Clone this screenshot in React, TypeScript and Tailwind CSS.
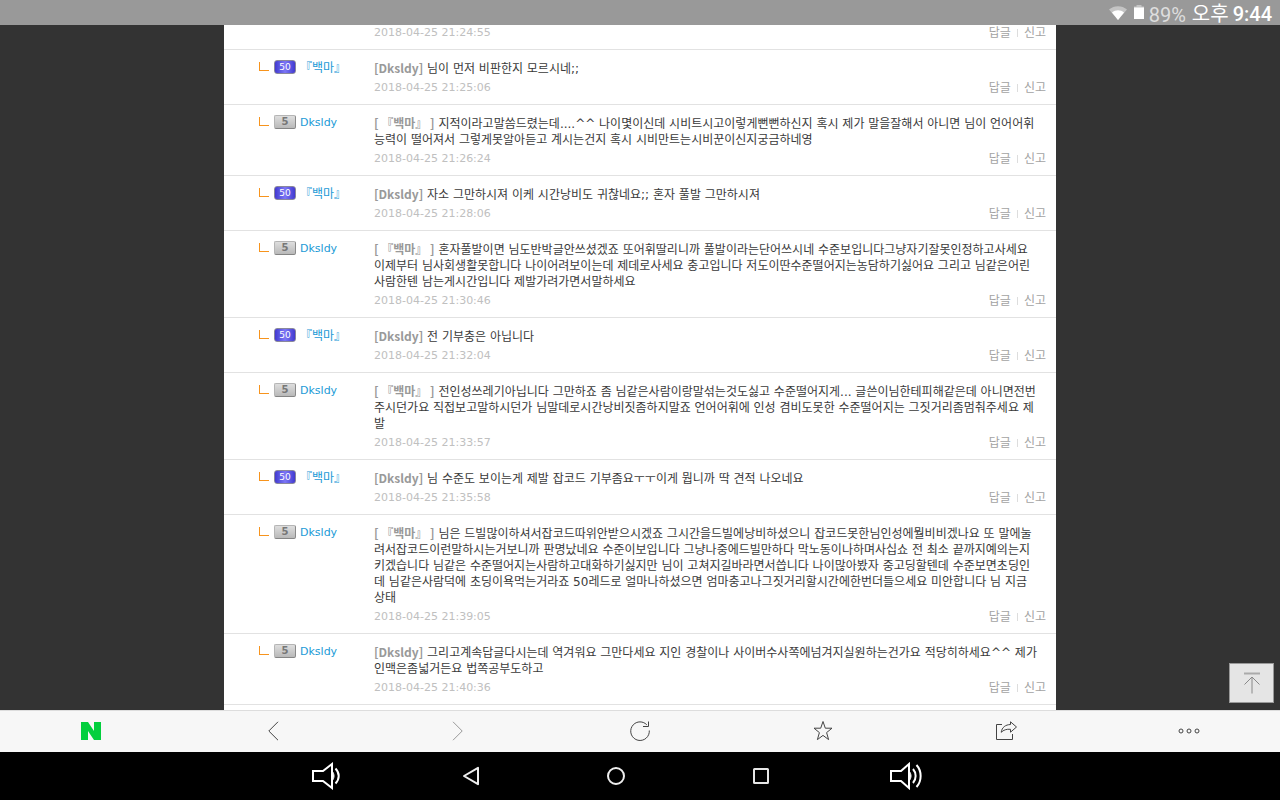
import { Fragment, type ReactNode } from 'react'

type Author = 'baekma' | 'dksldy'

type Comment = {
  id: number
  author: Author
  replyTo: string
  lines: string[]
  date: string
}

const BAEKMA = '[ 『백마』 ]'
const DKSLDY = '[Dksldy]'

const comments: Comment[] = [
  {
    id: 1,
    author: 'baekma',
    replyTo: DKSLDY,
    lines: ['님이 먼저 비판한지 모르시네;;'],
    date: '2018-04-25 21:25:06',
  },
  {
    id: 2,
    author: 'dksldy',
    replyTo: BAEKMA,
    lines: [
      '지적이라고말씀드렸는데....^^ 나이몇이신데 시비트시고이렇게뻔뻔하신지 혹시 제가 말을잘해서 아니면 님이 언어어휘',
      '능력이 떨어져서 그렇게못알아듣고 계시는건지 혹시 시비만트는시비꾼이신지궁금하네영',
    ],
    date: '2018-04-25 21:26:24',
  },
  {
    id: 3,
    author: 'baekma',
    replyTo: DKSLDY,
    lines: ['자소 그만하시져 이케 시간낭비도 귀찮네요;; 혼자 풀발 그만하시져'],
    date: '2018-04-25 21:28:06',
  },
  {
    id: 4,
    author: 'dksldy',
    replyTo: BAEKMA,
    lines: [
      '혼자풀발이면 님도반박글안쓰셨겠죠 또어휘딸리니까 풀발이라는단어쓰시네 수준보입니다그냥자기잘못인정하고사세요',
      '이제부터 님사회생활못합니다 나이어려보이는데 제데로사세요 충고입니다 저도이딴수준떨어지는농담하기싫어요 그리고 님같은어린',
      '사람한텐 남는게시간입니다 제발가려가면서말하세요',
    ],
    date: '2018-04-25 21:30:46',
  },
  {
    id: 5,
    author: 'baekma',
    replyTo: DKSLDY,
    lines: ['전 기부충은 아닙니다'],
    date: '2018-04-25 21:32:04',
  },
  {
    id: 6,
    author: 'dksldy',
    replyTo: BAEKMA,
    lines: [
      '전인성쓰레기아닙니다 그만하죠 좀 님같은사람이랑말섞는것도싫고 수준떨어지게... 글쓴이님한테피해같은데 아니면전번',
      '주시던가요 직접보고말하시던가 님말데로시간낭비짓좀하지말죠 언어어휘에 인성 겸비도못한 수준떨어지는 그짓거리좀멈춰주세요 제',
      '발',
    ],
    date: '2018-04-25 21:33:57',
  },
  {
    id: 7,
    author: 'baekma',
    replyTo: DKSLDY,
    lines: ['님 수준도 보이는게 제발 잡코드 기부좀요ㅜㅜ이게 뭡니까 딱 견적 나오네요'],
    date: '2018-04-25 21:35:58',
  },
  {
    id: 8,
    author: 'dksldy',
    replyTo: BAEKMA,
    lines: [
      '님은 드빌많이하셔서잡코드따위안받으시겠죠 그시간을드빌에낭비하셨으니 잡코드못한님인성에뭘비비겠나요 또 말에눌',
      '려서잡코드이런말하시는거보니까 판명났네요 수준이보입니다 그냥나중에드빌만하다 막노동이나하며사십쇼 전 최소 끝까지예의는지',
      '키겠습니다 님같은 수준떨어지는사람하고대화하기싫지만 님이 고쳐지길바라면서씁니다 나이많아봤자 중고딩할텐데 수준보면초딩인',
      '데 님같은사람덕에 초딩이욕먹는거라죠 50레드로 얼마나하셨으면 엄마충고나그짓거리할시간에한번더들으세요 미안합니다 님 지금',
      '상태',
    ],
    date: '2018-04-25 21:39:05',
  },
  {
    id: 9,
    author: 'dksldy',
    replyTo: DKSLDY,
    lines: [
      '그리고계속답글다시는데 역겨워요 그만다세요 지인 경찰이나 사이버수사쪽에넘겨지실원하는건가요 적당히하세요^^ 제가',
      '인맥은좀넓거든요 법쪽공부도하고',
    ],
    date: '2018-04-25 21:40:36',
  },
]

function LevelBadge({ author }: { author: Author }) {
  if (author === 'baekma') {
    return (
      <span className="mb-0.5 flex h-3.5 w-[22px] shrink-0 items-center justify-center rounded-[3px] border border-[#8a889c] bg-linear-to-r from-[#4338d0] via-[#7d76f5] to-[#4338d0] font-['DejaVu_Sans'] text-[9px] leading-none text-white">
        50
      </span>
    )
  }
  return (
    <span className="mb-0.5 flex h-3.5 w-[22px] shrink-0 items-center justify-center rounded-[2px] border border-t-[#b5b5b5] border-r-[#8a8a8a] border-b-[#858585] border-l-[#b5b5b5] bg-linear-to-b from-[#dedede] to-[#b9b9b9] font-['DejaVu_Sans'] text-[10px] font-bold leading-none text-[#777]">
      5
    </span>
  )
}

function CommentFooter({ date }: { date: string }) {
  return (
    <div className="flex h-4 items-center justify-between">
      <time className="font-['DejaVu_Sans'] text-[11px] text-[#c0c0c0]">{date}</time>
      <div className="flex items-center text-xs leading-4 text-[#a3a3a3]">
        <button type="button">답글</button>
        <span className="mx-[6px] h-2 w-px bg-[#ddd]" aria-hidden />
        <button type="button">신고</button>
      </div>
    </div>
  )
}

function CommentRow({ comment }: { comment: Comment }) {
  const { author, replyTo, lines, date } = comment
  return (
    <li className="flex border-b border-[#e2e2e2] pt-2.5 pr-2.5 pb-2">
      <div className="flex h-4 w-[150px] shrink-0 items-center pl-[35px]">
        <span className="mr-[5px] mb-1 h-[9px] w-2.5 shrink-0 border-b border-l border-[#f7941d]" aria-hidden />
        <LevelBadge author={author} />
        <a
          href="#profile"
          className={`ml-1 leading-4 text-[#1c9ad6] ${author === 'dksldy' ? 'text-[11px]' : 'text-xs'}`}
        >
          {author === 'dksldy' ? 'Dksldy' : '『백마』'}
        </a>
      </div>
      <div className="min-w-0 flex-1 pt-px">
        <p className="mb-[3px] text-xs leading-4 text-[#3a3a3a]">
          <strong className="font-['Noto_Sans_CJK_KR',sans-serif] leading-none font-bold text-[#999]">{replyTo}</strong>{' '}
          {lines.map((line, i) => (
            <Fragment key={line}>
              {i > 0 && <br />}
              {line}
            </Fragment>
          ))}
        </p>
        <CommentFooter date={date} />
      </div>
    </li>
  )
}

function StatusBar() {
  return (
    <header className="flex h-[25px] shrink-0 items-center justify-end bg-[#999] pr-2 font-['Roboto','Noto_Sans_CJK_KR',sans-serif] text-xl leading-6 text-white">
      <svg width="18" height="14" viewBox="0 0 18 14" aria-label="Wi-Fi">
        <path d="M0 3.5C5-1 13-1 18 3.5L9 14Z" fill="#c4c4c4" />
        <path d="M3 6.6C6.5 3.6 11.5 3.6 15 6.6L9 14Z" fill="#fff" />
      </svg>
      <svg className="ml-1.5" width="12" height="16" viewBox="0 0 12 16" aria-label="Battery">
        <path d="M3.5 0h5v1.5H11V3H1V1.5h2.5Z" fill="#c4c4c4" />
        <path d="M1 2.5h10V14H1Z" fill="#fff" />
      </svg>
      <span className="ml-1 pt-1 text-[#dedede]">89%</span>
      <span className="ml-1.5 pt-0.5">오후</span>
      <span className="ml-1 pt-0.5 font-medium">9:44</span>
    </header>
  )
}

function ToolButton({ label, children }: { label: string; children: ReactNode }) {
  return (
    <button type="button" aria-label={label} className="flex flex-1 items-center justify-center">
      {children}
    </button>
  )
}

function BrowserToolbar() {
  const stroke = { fill: 'none', stroke: '#444', strokeWidth: 1 }
  return (
    <nav className="flex h-[42px] shrink-0 border-t border-[#ddd] bg-[#f7f7f7] pb-0.5">
      <ToolButton label="Home">
        <svg width="20" height="18" viewBox="0 0 20 18">
          <path d="M0 0h7l6 9V0h7v18h-7L7 9v9H0Z" fill="#03cf3d" />
        </svg>
      </ToolButton>
      <ToolButton label="Back">
        <svg width="12" height="20" viewBox="0 0 12 20" {...stroke}>
          <path d="M10 .8.8 10l9.2 9.2" />
        </svg>
      </ToolButton>
      <ToolButton label="Forward">
        <svg width="12" height="20" viewBox="0 0 12 20" fill="none" stroke="#999">
          <path d="M2 .8 11.2 10 2 19.2" />
        </svg>
      </ToolButton>
      <ToolButton label="Reload">
        <svg width="22" height="22" viewBox="0 0 22 22" {...stroke}>
          <path d="M20.3 10.5A9.3 9.3 0 1 1 17.8 4.8" />
          <path d="M19.5 1.5v5H14" />
        </svg>
      </ToolButton>
      <ToolButton label="Bookmark">
        <svg width="22" height="22" viewBox="0 0 22 22" {...stroke}>
          <path d="m11 1.5 2.3 6.7h6.7l-5.4 4.4 2 7-5.6-4.2-5.6 4.2 2-7L2 8.2h6.7Z" />
        </svg>
      </ToolButton>
      <ToolButton label="Share">
        <svg width="24" height="22" viewBox="0 0 24 22" {...stroke}>
          <path d="M8 4.5H2.5v15h16V14" />
          <path d="M16.5 1.8 22.5 7l-6 5.2V9.3c-4-.4-7 .7-9.3 3 .7-5 4.3-7.6 9.3-7.8Z" />
        </svg>
      </ToolButton>
      <ToolButton label="More">
        <svg width="22" height="6" viewBox="0 0 22 6" fill="none" stroke="#444">
          <circle cx="3" cy="3" r="2" />
          <circle cx="11" cy="3" r="2" />
          <circle cx="19" cy="3" r="2" />
        </svg>
      </ToolButton>
    </nav>
  )
}

function SystemNav() {
  return (
    <nav className="flex h-12 shrink-0 justify-center bg-black pr-12">
      <div className="flex w-full max-w-[725px]">
        <ToolButton label="Volume down">
          <svg width="30" height="28" viewBox="0 0 30 28" fill="none" stroke="#fff" strokeWidth="2">
            <path d="M2 9h10l9-7v24l-9-7H2Z" />
            <path d="M21.5 9.5c2 2.7 2 6.3 0 9Z" fill="#fff" strokeWidth="1" />
            <path d="M24.5 6.5c4.3 4.5 4.3 10.5 0 15" />
          </svg>
        </ToolButton>
        <ToolButton label="Back">
          <svg width="18" height="20" viewBox="0 0 18 20" fill="none" stroke="#eee" strokeWidth="2" strokeLinejoin="round">
            <path d="M16 1.8v16.4L2 10Z" />
          </svg>
        </ToolButton>
        <ToolButton label="Home">
          <svg width="18" height="18" viewBox="0 0 18 18" fill="none" stroke="#eee" strokeWidth="2">
            <circle cx="9" cy="9" r="8" />
          </svg>
        </ToolButton>
        <ToolButton label="Recent apps">
          <svg width="16" height="16" viewBox="0 0 16 16" fill="none" stroke="#e6e6e6" strokeWidth="2">
            <rect x="1" y="1" width="14" height="14" rx=".5" />
          </svg>
        </ToolButton>
        <ToolButton label="Volume up">
          <svg width="34" height="28" viewBox="0 0 34 28" fill="none" stroke="#fff" strokeWidth="2">
            <path d="M2 9h10l8-7v24l-8-7H2Z" />
            <path d="M20.5 9.5c2 2.7 2 6.3 0 9Z" fill="#fff" strokeWidth="1" />
            <path d="M24 7c3.500 4 3.500 10 0 14M27.500 3c5.500 6 5.500 16 0 22" />
          </svg>
        </ToolButton>
      </div>
    </nav>
  )
}

export default function App() {
  return (
    <div className="flex h-screen flex-col bg-[#333] font-['DejaVu_Sans','Noto_Sans_CJK_KR',sans-serif]">
      <StatusBar />
      <main className="relative min-h-0 flex-1 overflow-hidden">
        <div className="mx-auto h-full w-[65%] bg-white">
          <ul>
            {/* tail of the comment scrolled off the top */}
            <li className="border-b border-[#e2e2e2] pr-2.5 pb-2 pl-[150px]">
              <CommentFooter date="2018-04-25 21:24:55" />
            </li>
            {comments.map((comment) => (
              <CommentRow key={comment.id} comment={comment} />
            ))}
          </ul>
        </div>
        <button
          type="button"
          aria-label="Back to top"
          className="absolute right-1.5 bottom-[7px] flex h-10 w-[45px] items-center justify-center border border-[#999] bg-[#e5e5e5]"
        >
          <svg width="18" height="22" viewBox="0 0 18 22" fill="none" stroke="#888">
            <path d="M1 1.5h16" strokeWidth="2" stroke="#aaa" />
            <path d="M9 21.5V5M1.5 12.5 9 5l7.5 7.5" />
          </svg>
        </button>
      </main>
      <BrowserToolbar />
      <SystemNav />
    </div>
  )
}
